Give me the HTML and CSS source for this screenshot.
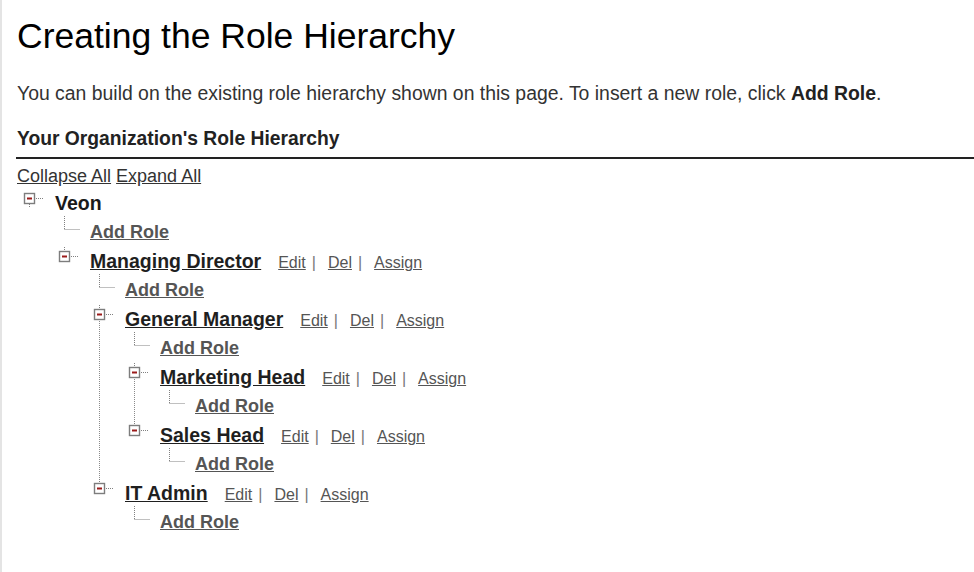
FILE: index.html
```html
<!DOCTYPE html>
<html lang="en">
<head>
<meta charset="utf-8">
<title>Creating the Role Hierarchy</title>
<link rel="stylesheet" href="styles.css">
</head>
<body>
<div class="page">
  <h1 class="title">Creating the Role Hierarchy</h1>
  <p class="intro">You can build on the existing role hierarchy shown on this page. To insert a new role, click <b>Add Role</b>.</p>
  <h2 class="section">Your Organization's Role Hierarchy</h2>
  <div class="toolbar"><a href="#">Collapse All</a> <a href="#">Expand All</a></div>

  <ul class="tree root">
    <li class="node">
      <div class="row">
        <svg class="tog" width="32" height="29" viewBox="0 0 32 29"><line class="dot" x1="6.5" y1="15" x2="6.5" y2="19"/><rect x="1.5" y="4.5" width="10" height="10" class="box"/><line x1="4" y1="9.5" x2="9" y2="9.5" class="minus"/><line class="dot" x1="13" y1="9.5" x2="21" y2="9.5"/></svg>
        <span class="label"><span class="rootname">Veon</span></span>
      </div>
      <ul class="tree">
        <li class="add">
          <div class="row">
            <svg class="tog" width="32" height="29" viewBox="0 0 32 29"><line class="dot" x1="6.5" y1="-2" x2="6.5" y2="11"/><line class="dot" x1="6.5" y1="11.5" x2="22" y2="11.5"/></svg>
            <span class="label"><a href="#" class="addrole">Add Role</a></span>
          </div>
        </li>
        <li class="node">
          <div class="row">
            <svg class="tog" width="32" height="29" viewBox="0 0 32 29"><line class="dot" x1="6.5" y1="0" x2="6.5" y2="3"/><rect x="1.5" y="4.5" width="10" height="10" class="box"/><line x1="4" y1="9.5" x2="9" y2="9.5" class="minus"/><line class="dot" x1="13" y1="9.5" x2="21" y2="9.5"/></svg>
            <span class="label"><a href="#" class="name">Managing Director</a><span class="acts"><a href="#">Edit</a><span class="sep">|</span><a href="#">Del</a><span class="sep">|</span><a href="#">Assign</a></span></span>
          </div>
          <ul class="tree">
            <li class="add">
              <div class="row">
                <svg class="tog" width="32" height="29" viewBox="0 0 32 29"><line class="dot" x1="6.5" y1="-2" x2="6.5" y2="11"/><line class="dot" x1="6.5" y1="11.5" x2="22" y2="11.5"/></svg>
                <span class="label"><a href="#" class="addrole">Add Role</a></span>
              </div>
            </li>
            <li class="node">
              <div class="row">
                <svg class="tog" width="32" height="29" viewBox="0 0 32 29"><line class="dot" x1="6.5" y1="0" x2="6.5" y2="3"/><rect x="1.5" y="4.5" width="10" height="10" class="box"/><line x1="4" y1="9.5" x2="9" y2="9.5" class="minus"/><line class="dot" x1="13" y1="9.5" x2="21" y2="9.5"/></svg>
                <span class="label"><a href="#" class="name">General Manager</a><span class="acts"><a href="#">Edit</a><span class="sep">|</span><a href="#">Del</a><span class="sep">|</span><a href="#">Assign</a></span></span>
              </div>
              <ul class="tree">
                <li class="add">
                  <div class="row">
                    <svg class="tog" width="32" height="29" viewBox="0 0 32 29"><line class="dot" x1="6.5" y1="-2" x2="6.5" y2="11"/><line class="dot" x1="6.5" y1="11.5" x2="22" y2="11.5"/></svg>
                    <span class="label"><a href="#" class="addrole">Add Role</a></span>
                  </div>
                </li>
                <li class="node">
                  <div class="row">
                    <svg class="tog" width="32" height="29" viewBox="0 0 32 29"><line class="dot" x1="6.5" y1="0" x2="6.5" y2="3"/><rect x="1.5" y="4.5" width="10" height="10" class="box"/><line x1="4" y1="9.5" x2="9" y2="9.5" class="minus"/><line class="dot" x1="13" y1="9.5" x2="21" y2="9.5"/></svg>
                    <span class="label"><a href="#" class="name">Marketing Head</a><span class="acts"><a href="#">Edit</a><span class="sep">|</span><a href="#">Del</a><span class="sep">|</span><a href="#">Assign</a></span></span>
                  </div>
                  <ul class="tree">
                    <li class="add">
                      <div class="row">
                        <svg class="tog" width="32" height="29" viewBox="0 0 32 29"><line class="dot" x1="6.5" y1="-2" x2="6.5" y2="11"/><line class="dot" x1="6.5" y1="11.5" x2="22" y2="11.5"/></svg>
                        <span class="label"><a href="#" class="addrole">Add Role</a></span>
                      </div>
                    </li>
                  </ul>
                </li>
                <li class="node">
                  <div class="row">
                    <svg class="tog" width="32" height="29" viewBox="0 0 32 29"><line class="dot" x1="6.5" y1="0" x2="6.5" y2="3"/><rect x="1.5" y="4.5" width="10" height="10" class="box"/><line x1="4" y1="9.5" x2="9" y2="9.5" class="minus"/><line class="dot" x1="13" y1="9.5" x2="21" y2="9.5"/></svg>
                    <span class="label"><a href="#" class="name">Sales Head</a><span class="acts"><a href="#">Edit</a><span class="sep">|</span><a href="#">Del</a><span class="sep">|</span><a href="#">Assign</a></span></span>
                  </div>
                  <ul class="tree">
                    <li class="add">
                      <div class="row">
                        <svg class="tog" width="32" height="29" viewBox="0 0 32 29"><line class="dot" x1="6.5" y1="-2" x2="6.5" y2="11"/><line class="dot" x1="6.5" y1="11.5" x2="22" y2="11.5"/></svg>
                        <span class="label"><a href="#" class="addrole">Add Role</a></span>
                      </div>
                    </li>
                  </ul>
                </li>
              </ul>
            </li>
            <li class="node">
              <div class="row">
                <svg class="tog" width="32" height="29" viewBox="0 0 32 29"><line class="dot" x1="6.5" y1="0" x2="6.5" y2="3"/><rect x="1.5" y="4.5" width="10" height="10" class="box"/><line x1="4" y1="9.5" x2="9" y2="9.5" class="minus"/><line class="dot" x1="13" y1="9.5" x2="21" y2="9.5"/></svg>
                <span class="label"><a href="#" class="name">IT Admin</a><span class="acts"><a href="#">Edit</a><span class="sep">|</span><a href="#">Del</a><span class="sep">|</span><a href="#">Assign</a></span></span>
              </div>
              <ul class="tree">
                <li class="add">
                  <div class="row">
                    <svg class="tog" width="32" height="29" viewBox="0 0 32 29"><line class="dot" x1="6.5" y1="-2" x2="6.5" y2="11"/><line class="dot" x1="6.5" y1="11.5" x2="22" y2="11.5"/></svg>
                    <span class="label"><a href="#" class="addrole">Add Role</a></span>
                  </div>
                </li>
              </ul>
            </li>
          </ul>
        </li>
      </ul>
    </li>
  </ul>
</div>
</body>
</html>
```

FILE: styles.css
```css
html, body {
  margin: 0;
  padding: 0;
  background: #fff;
}

body {
  font-family: "Liberation Sans", Arial, sans-serif;
  color: #333;
}

.page {
  min-height: 572px;
  box-sizing: border-box;
  border-left: 2px solid #e4e4e4;
  padding: 16px 0 0 15px;
}

.title {
  margin: 0;
  font-size: 35.5px;
  line-height: 40px;
  font-weight: normal;
  color: #000;
}

.intro {
  margin: 26px 0 0 0;
  font-size: 19.4px;
  line-height: 22px;
  color: #333;
}

.intro b {
  color: #222;
}

.section {
  margin: 23px 0 0 -1px;
  padding: 0 0 6px 1px;
  font-size: 19.3px;
  line-height: 24px;
  font-weight: bold;
  color: #222;
  border-bottom: 2px solid #222;
}

.toolbar {
  margin-top: 6px;
  font-size: 18px;
  line-height: 22px;
}

.toolbar a {
  color: #333;
  text-decoration: underline;
}

.tree {
  list-style: none;
  margin: 0;
  padding: 0 0 0 35px;
}

.tree.root {
  padding-left: 6px;
  margin-top: 2px;
}

.tree li {
  margin: 0;
  padding: 0;
}

.node:not(:last-child) {
  background-image: repeating-linear-gradient(to bottom, #8a8a8a 0 1px, transparent 1px 2px);
  background-repeat: no-repeat;
  background-size: 1px 100%;
  background-position: 6px 0;
}

.row {
  display: flex;
  align-items: flex-start;
  height: 29px;
}

.tog {
  display: block;
  flex: none;
  overflow: visible;
}

.tog .dot {
  stroke: #808080;
  stroke-width: 1;
  stroke-dasharray: 1 1;
}

.tog .box {
  fill: #fff;
  stroke: #7d7d7d;
  stroke-width: 1.4;
}

.tog .minus {
  stroke: #9b1b1b;
  stroke-width: 2;
}

.label {
  line-height: 29px;
  white-space: nowrap;
}

.rootname {
  font-size: 19.5px;
  font-weight: bold;
  color: #1a1a1a;
}

.name {
  font-size: 19.5px;
  font-weight: bold;
  color: #1f1f1f;
  text-decoration: underline;
}

.addrole {
  font-size: 18px;
  font-weight: bold;
  color: #555;
  text-decoration: underline;
}

.acts {
  margin-left: 17px;
  font-size: 16px;
}

.acts a {
  color: #555;
  text-decoration: underline;
}

.sep {
  color: #777;
  margin: 0 12px 0 6px;
}
```
